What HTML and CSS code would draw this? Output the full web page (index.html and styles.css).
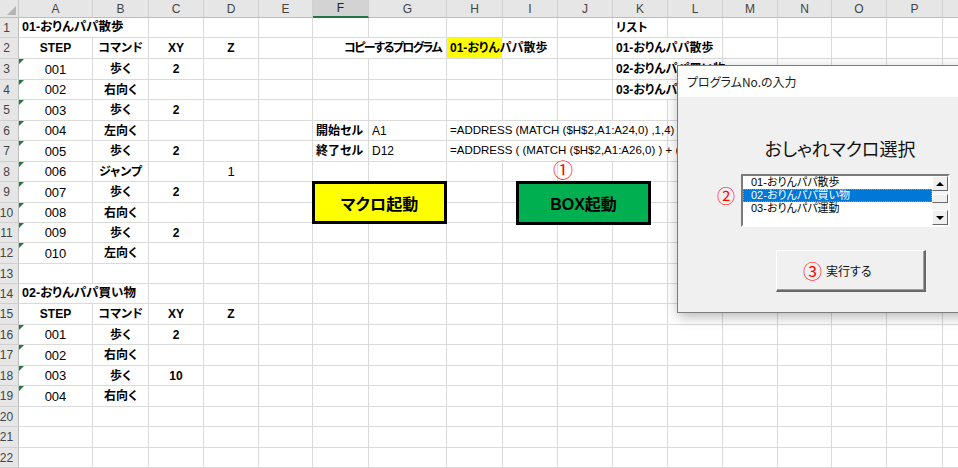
FILE: index.html
```html
<!DOCTYPE html>
<html lang="ja">
<head>
<meta charset="utf-8">
<title>おしゃれマクロ</title>
<link rel="stylesheet" href="styles.css">
</head>
<body>
<div class="app">
  <div class="sheet">
    <div class="row hdr">
      <div class="corner"></div>
      <div class="ch">A</div><div class="ch">B</div><div class="ch">C</div><div class="ch">D</div><div class="ch">E</div><div class="ch sel">F</div><div class="ch">G</div><div class="ch">H</div><div class="ch">I</div><div class="ch">J</div><div class="ch">K</div><div class="ch">L</div><div class="ch">M</div><div class="ch">N</div><div class="ch">O</div><div class="ch">P</div><div class="ch"></div>
    </div>

    <div class="row">
      <div class="rh">1</div>
      <div class="c s2 b ttl">01-おりんパパ散歩</div>
      <div class="c"></div><div class="c"></div><div class="c"></div><div class="c"></div><div class="c"></div><div class="c"></div><div class="c"></div><div class="c"></div>
      <div class="c b">リスト</div>
      <div class="c"></div><div class="c"></div><div class="c"></div><div class="c"></div><div class="c"></div><div class="c"></div>
    </div>

    <div class="row t">
      <div class="rh">2</div>
      <div class="c ctr b">STEP</div><div class="c ctr b">コマンド</div><div class="c ctr b">XY</div><div class="c ctr b">Z</div><div class="c"></div>
      <div class="c s2 rt b tight">コピーするプログラム</div>
      <div class="c s2 b hl">01-おりんパパ散歩</div>
      <div class="c"></div>
      <div class="c s2 b">01-おりんパパ散歩</div>
      <div class="c"></div><div class="c"></div><div class="c"></div><div class="c"></div><div class="c"></div>
    </div>

    <div class="row t">
      <div class="rh">3</div>
      <div class="c ctr tri num">001</div><div class="c ctr b">歩く</div><div class="c ctr b">2</div><div class="c"></div><div class="c"></div>
      <div class="c"></div><div class="c"></div><div class="c"></div><div class="c"></div><div class="c"></div>
      <div class="c s2 b">02-おりんパパ買い物</div>
      <div class="c"></div><div class="c"></div><div class="c"></div><div class="c"></div><div class="c"></div>
    </div>

    <div class="row">
      <div class="rh">4</div>
      <div class="c ctr tri num">002</div><div class="c ctr b">右向く</div><div class="c"></div><div class="c"></div><div class="c"></div>
      <div class="c"></div><div class="c"></div><div class="c"></div><div class="c"></div><div class="c"></div>
      <div class="c s2 b">03-おりんパパ運動</div>
      <div class="c"></div><div class="c"></div><div class="c"></div><div class="c"></div><div class="c"></div>
    </div>

    <div class="row t">
      <div class="rh">5</div>
      <div class="c ctr tri num">003</div><div class="c ctr b">歩く</div><div class="c ctr b">2</div><div class="c"></div><div class="c"></div>
      <div class="c"></div><div class="c"></div><div class="c"></div><div class="c"></div><div class="c"></div><div class="c"></div><div class="c"></div><div class="c"></div><div class="c"></div><div class="c"></div><div class="c"></div><div class="c"></div>
    </div>

    <div class="row">
      <div class="rh">6</div>
      <div class="c ctr tri num">004</div><div class="c ctr b">左向く</div><div class="c"></div><div class="c"></div><div class="c"></div>
      <div class="c b">開始セル</div><div class="c">A1</div>
      <div class="c s4 f">=ADDRESS (MATCH ($H$2,A1:A24,0) ,1,4)</div>
      <div class="c"></div><div class="c"></div><div class="c"></div><div class="c"></div><div class="c"></div><div class="c"></div>
    </div>

    <div class="row t">
      <div class="rh">7</div>
      <div class="c ctr tri num">005</div><div class="c ctr b">歩く</div><div class="c ctr b">2</div><div class="c"></div><div class="c"></div>
      <div class="c b">終了セル</div><div class="c">D12</div>
      <div class="c s4 f">=ADDRESS ( (MATCH ($H$2,A1:A26,0) ) + (MA</div>
      <div class="c"></div><div class="c"></div><div class="c"></div><div class="c"></div><div class="c"></div><div class="c"></div>
    </div>

    <div class="row">
      <div class="rh">8</div>
      <div class="c ctr tri num">006</div><div class="c ctr b">ジャンプ</div><div class="c"></div><div class="c ctr num">1</div><div class="c"></div>
      <div class="c"></div><div class="c"></div><div class="c"></div><div class="c"></div><div class="c"></div><div class="c"></div><div class="c"></div><div class="c"></div><div class="c"></div><div class="c"></div><div class="c"></div><div class="c"></div>
    </div>

    <div class="row t">
      <div class="rh">9</div>
      <div class="c ctr tri num">007</div><div class="c ctr b">歩く</div><div class="c ctr b">2</div><div class="c"></div><div class="c"></div>
      <div class="c"></div><div class="c"></div><div class="c"></div><div class="c"></div><div class="c"></div><div class="c"></div><div class="c"></div><div class="c"></div><div class="c"></div><div class="c"></div><div class="c"></div><div class="c"></div>
    </div>

    <div class="row">
      <div class="rh">10</div>
      <div class="c ctr tri num">008</div><div class="c ctr b">右向く</div><div class="c"></div><div class="c"></div><div class="c"></div>
      <div class="c"></div><div class="c"></div><div class="c"></div><div class="c"></div><div class="c"></div><div class="c"></div><div class="c"></div><div class="c"></div><div class="c"></div><div class="c"></div><div class="c"></div><div class="c"></div>
    </div>

    <div class="row">
      <div class="rh">11</div>
      <div class="c ctr tri num">009</div><div class="c ctr b">歩く</div><div class="c ctr b">2</div><div class="c"></div><div class="c"></div>
      <div class="c"></div><div class="c"></div><div class="c"></div><div class="c"></div><div class="c"></div><div class="c"></div><div class="c"></div><div class="c"></div><div class="c"></div><div class="c"></div><div class="c"></div><div class="c"></div>
    </div>

    <div class="row t">
      <div class="rh">12</div>
      <div class="c ctr tri num">010</div><div class="c ctr b">左向く</div><div class="c"></div><div class="c"></div><div class="c"></div>
      <div class="c"></div><div class="c"></div><div class="c"></div><div class="c"></div><div class="c"></div><div class="c"></div><div class="c"></div><div class="c"></div><div class="c"></div><div class="c"></div><div class="c"></div><div class="c"></div>
    </div>

    <div class="row">
      <div class="rh">13</div>
      <div class="c"></div><div class="c"></div><div class="c"></div><div class="c"></div><div class="c"></div>
      <div class="c"></div><div class="c"></div><div class="c"></div><div class="c"></div><div class="c"></div><div class="c"></div><div class="c"></div><div class="c"></div><div class="c"></div><div class="c"></div><div class="c"></div><div class="c"></div>
    </div>

    <div class="row">
      <div class="rh">14</div>
      <div class="c s2 b ttl">02-おりんパパ買い物</div>
      <div class="c"></div><div class="c"></div><div class="c"></div>
      <div class="c"></div><div class="c"></div><div class="c"></div><div class="c"></div><div class="c"></div><div class="c"></div><div class="c"></div><div class="c"></div><div class="c"></div><div class="c"></div><div class="c"></div><div class="c"></div>
    </div>

    <div class="row t">
      <div class="rh">15</div>
      <div class="c ctr b">STEP</div><div class="c ctr b">コマンド</div><div class="c ctr b">XY</div><div class="c ctr b">Z</div><div class="c"></div>
      <div class="c"></div><div class="c"></div><div class="c"></div><div class="c"></div><div class="c"></div><div class="c"></div><div class="c"></div><div class="c"></div><div class="c"></div><div class="c"></div><div class="c"></div><div class="c"></div>
    </div>

    <div class="row">
      <div class="rh">16</div>
      <div class="c ctr tri num">001</div><div class="c ctr b">歩く</div><div class="c ctr b">2</div><div class="c"></div><div class="c"></div>
      <div class="c"></div><div class="c"></div><div class="c"></div><div class="c"></div><div class="c"></div><div class="c"></div><div class="c"></div><div class="c"></div><div class="c"></div><div class="c"></div><div class="c"></div><div class="c"></div>
    </div>

    <div class="row t">
      <div class="rh">17</div>
      <div class="c ctr tri num">002</div><div class="c ctr b">右向く</div><div class="c"></div><div class="c"></div><div class="c"></div>
      <div class="c"></div><div class="c"></div><div class="c"></div><div class="c"></div><div class="c"></div><div class="c"></div><div class="c"></div><div class="c"></div><div class="c"></div><div class="c"></div><div class="c"></div><div class="c"></div>
    </div>

    <div class="row">
      <div class="rh">18</div>
      <div class="c ctr tri num">003</div><div class="c ctr b">歩く</div><div class="c ctr b">10</div><div class="c"></div><div class="c"></div>
      <div class="c"></div><div class="c"></div><div class="c"></div><div class="c"></div><div class="c"></div><div class="c"></div><div class="c"></div><div class="c"></div><div class="c"></div><div class="c"></div><div class="c"></div><div class="c"></div>
    </div>

    <div class="row t">
      <div class="rh">19</div>
      <div class="c ctr tri num">004</div><div class="c ctr b">右向く</div><div class="c"></div><div class="c"></div><div class="c"></div>
      <div class="c"></div><div class="c"></div><div class="c"></div><div class="c"></div><div class="c"></div><div class="c"></div><div class="c"></div><div class="c"></div><div class="c"></div><div class="c"></div><div class="c"></div><div class="c"></div>
    </div>

    <div class="row">
      <div class="rh">20</div>
      <div class="c"></div><div class="c"></div><div class="c"></div><div class="c"></div><div class="c"></div>
      <div class="c"></div><div class="c"></div><div class="c"></div><div class="c"></div><div class="c"></div><div class="c"></div><div class="c"></div><div class="c"></div><div class="c"></div><div class="c"></div><div class="c"></div><div class="c"></div>
    </div>

    <div class="row t">
      <div class="rh">21</div>
      <div class="c"></div><div class="c"></div><div class="c"></div><div class="c"></div><div class="c"></div>
      <div class="c"></div><div class="c"></div><div class="c"></div><div class="c"></div><div class="c"></div><div class="c"></div><div class="c"></div><div class="c"></div><div class="c"></div><div class="c"></div><div class="c"></div><div class="c"></div>
    </div>

    <div class="row">
      <div class="rh">22</div>
      <div class="c"></div><div class="c"></div><div class="c"></div><div class="c"></div><div class="c"></div>
      <div class="c"></div><div class="c"></div><div class="c"></div><div class="c"></div><div class="c"></div><div class="c"></div><div class="c"></div><div class="c"></div><div class="c"></div><div class="c"></div><div class="c"></div><div class="c"></div>
    </div>
  </div>

  <div class="shape macro">マクロ起動</div>
  <div class="shape boxbtn">BOX起動</div>
  <div class="mark n1">①</div>

  <div class="dlg">
    <div class="dlg-title">プログラムNo.の入力</div>
    <div class="dlg-body">
      <div class="heading">おしゃれマクロ選択</div>
      <div class="listrow">
        <span class="n2">②</span>
        <div class="listbox">
          <div class="items">
            <div class="item">01-おりんパパ散歩</div>
            <div class="item on">02-おりんパパ買い物</div>
            <div class="item">03-おりんパパ運動</div>
          </div>
          <div class="scroll">
            <div class="sb up"></div>
            <div class="thumb"></div>
            <div class="track"></div>
            <div class="sb down"></div>
          </div>
        </div>
      </div>
      <div class="run"><span class="n3">③</span>実行する</div>
    </div>
  </div>
</div>
</body>
</html>
```

FILE: styles.css
```css
* { box-sizing: border-box; }
html, body { margin: 0; padding: 0; overflow: hidden; background: #fff; }
body {
  width: 958px;
  height: 468px;
  font-family: "Liberation Sans", "Noto Sans CJK JP", sans-serif;
  font-feature-settings: "palt";
  color: #000;
}
.app { position: relative; width: 958px; height: 468px; overflow: hidden; }
.sheet { width: 998px; }

.row {
  display: grid;
  grid-template-columns: 19px 74px 56px 55px 55px 54px 56px 78px 56px 55px 55px 55px 55px 55px 54px 55px 56px 55px;
  height: 20px;
}
.row.t { height: 21px; }
.row.hdr { height: 18px; }

.corner {
  position: relative;
  background: #e6e6e6;
  border-right: 1px solid #c9c9c9;
  border-bottom: 1px solid #bdbdbd;
}
.corner::after {
  content: "";
  position: absolute;
  right: 2px;
  bottom: 2px;
  border-style: solid;
  border-width: 0 0 9px 9px;
  border-color: transparent transparent #b5b5b5 transparent;
}
.ch {
  background: #e6e6e6;
  border-right: 1px solid #d0d0d0;
  border-bottom: 1px solid #bdbdbd;
  color: #444;
  font-size: 12px;
  display: flex;
  align-items: center;
  justify-content: center;
}
.ch.sel {
  background: #d3d3d3;
  color: #222;
  border-bottom: 2px solid #217346;
}
.rh {
  background: #e6e6e6;
  border-right: 1px solid #bdbdbd;
  border-bottom: 1px solid #d0d0d0;
  color: #444;
  font-size: 12px;
  display: flex;
  align-items: center;
  justify-content: center;
  padding-right: 5px;
  white-space: nowrap;
  overflow: visible;
}

.c {
  position: relative;
  min-width: 0;
  border-right: 1px solid #dadada;
  border-bottom: 1px solid #dadada;
  font-size: 12px;
  line-height: 1;
  display: flex;
  align-items: center;
  padding: 0 3px;
  white-space: nowrap;
  overflow: visible;
}
.s2 { grid-column: span 2; }
.s4 { grid-column: span 4; }
.s6 { grid-column: span 6; }
.ctr { justify-content: center; }
.rt { justify-content: flex-end; }
.b { font-weight: bold; }
.ttl { font-size: 12.5px; }
.tight { letter-spacing: -1.6px; padding-right: 5px; }
.num { font-weight: normal; font-size: 13px; }
.f { font-size: 11.5px; }
.hl { background: linear-gradient(to right, #ffff00 55px, transparent 55px); }
.tri::before {
  content: "";
  position: absolute;
  left: 0;
  top: 0;
  border-style: solid;
  border-width: 5px 5px 0 0;
  border-color: #217a3c transparent transparent transparent;
}

.shape {
  position: absolute;
  border: 3px solid #000;
  display: flex;
  align-items: center;
  justify-content: center;
  font-size: 16px;
  font-weight: bold;
  color: #000;
}
.macro { left: 312px; top: 181px; width: 135px; height: 43px; background: #ffff00; }
.boxbtn { left: 516px; top: 181px; width: 135px; height: 44px; background: #00b050; }

.mark {
  color: #ff0000;
  font-family: "Noto Sans CJK JP", sans-serif;
  font-feature-settings: normal;
}
.n1 { position: absolute; left: 553px; top: 159px; font-size: 20px; line-height: 22px; }

.dlg {
  position: absolute;
  left: 677px;
  top: 65px;
  width: 326px;
  height: 248px;
  border: 1px solid #7c7c7c;
  background: #f0f0f0;
  box-shadow: 1px 4px 12px rgba(0, 0, 0, 0.28);
  display: flex;
  flex-direction: column;
  font-family: "Noto Sans CJK JP", sans-serif;
}
.dlg-title {
  height: 31px;
  background: #fff;
  display: flex;
  align-items: center;
  padding-left: 9px;
  font-size: 12px;
  color: #222;
}
.dlg-body { flex: 1; display: flex; flex-direction: column; }
.heading {
  margin-top: 39px;
  text-align: center;
  font-size: 18px;
  line-height: 24px;
  color: #111;
}
.listrow {
  display: flex;
  align-items: flex-start;
  margin-top: 14px;
  padding-left: 39px;
}
.n2 {
  color: #ff0000;
  font-size: 18px;
  line-height: 20px;
  width: 19px;
  margin-top: 11px;
  margin-right: 5px;
  font-feature-settings: normal;
}
.listbox {
  width: 209px;
  height: 53px;
  background: #fff;
  border: 2px solid;
  border-color: #7a7a7a #fff #fff #7a7a7a;
  display: flex;
}
.items { flex: 1; }
.item {
  height: 13px;
  font-family: "Liberation Sans", "Noto Sans CJK JP", sans-serif;
  font-size: 11px;
  line-height: 13px;
  padding-left: 8px;
  color: #000;
  white-space: nowrap;
}
.item.on {
  background: #0078d7;
  color: #fff;
  outline: 1px dotted #d08a30;
  outline-offset: -1px;
}
.scroll {
  width: 16px;
  display: flex;
  flex-direction: column;
  background: #f4f4f4;
}
.sb, .thumb {
  background: #f0f0f0;
  border: 1px solid;
  border-color: #fff #696969 #696969 #fff;
  display: flex;
  align-items: center;
  justify-content: center;
}
.sb { height: 15px; }
.thumb { height: 9px; margin-top: 3px; }
.track { flex: 1; }
.up::after, .down::after {
  content: "";
  border-left: 4px solid transparent;
  border-right: 4px solid transparent;
}
.up::after { border-bottom: 4px solid #000; }
.down::after { border-top: 4px solid #000; }

.run {
  margin-top: 23px;
  margin-left: 98px;
  width: 150px;
  height: 42px;
  display: flex;
  align-items: center;
  padding-left: 26px;
  font-size: 12px;
  color: #111;
  background: #f0f0f0;
  border-top: 1px solid #fff;
  border-left: 1px solid #fff;
  border-right: 2px solid #696969;
  border-bottom: 2px solid #696969;
  box-shadow: inset -1px -1px 0 #a0a0a0;
}
.n3 {
  color: #ff0000;
  font-size: 19px;
  line-height: 20px;
  margin-right: 4px;
  font-feature-settings: normal;
}
```
